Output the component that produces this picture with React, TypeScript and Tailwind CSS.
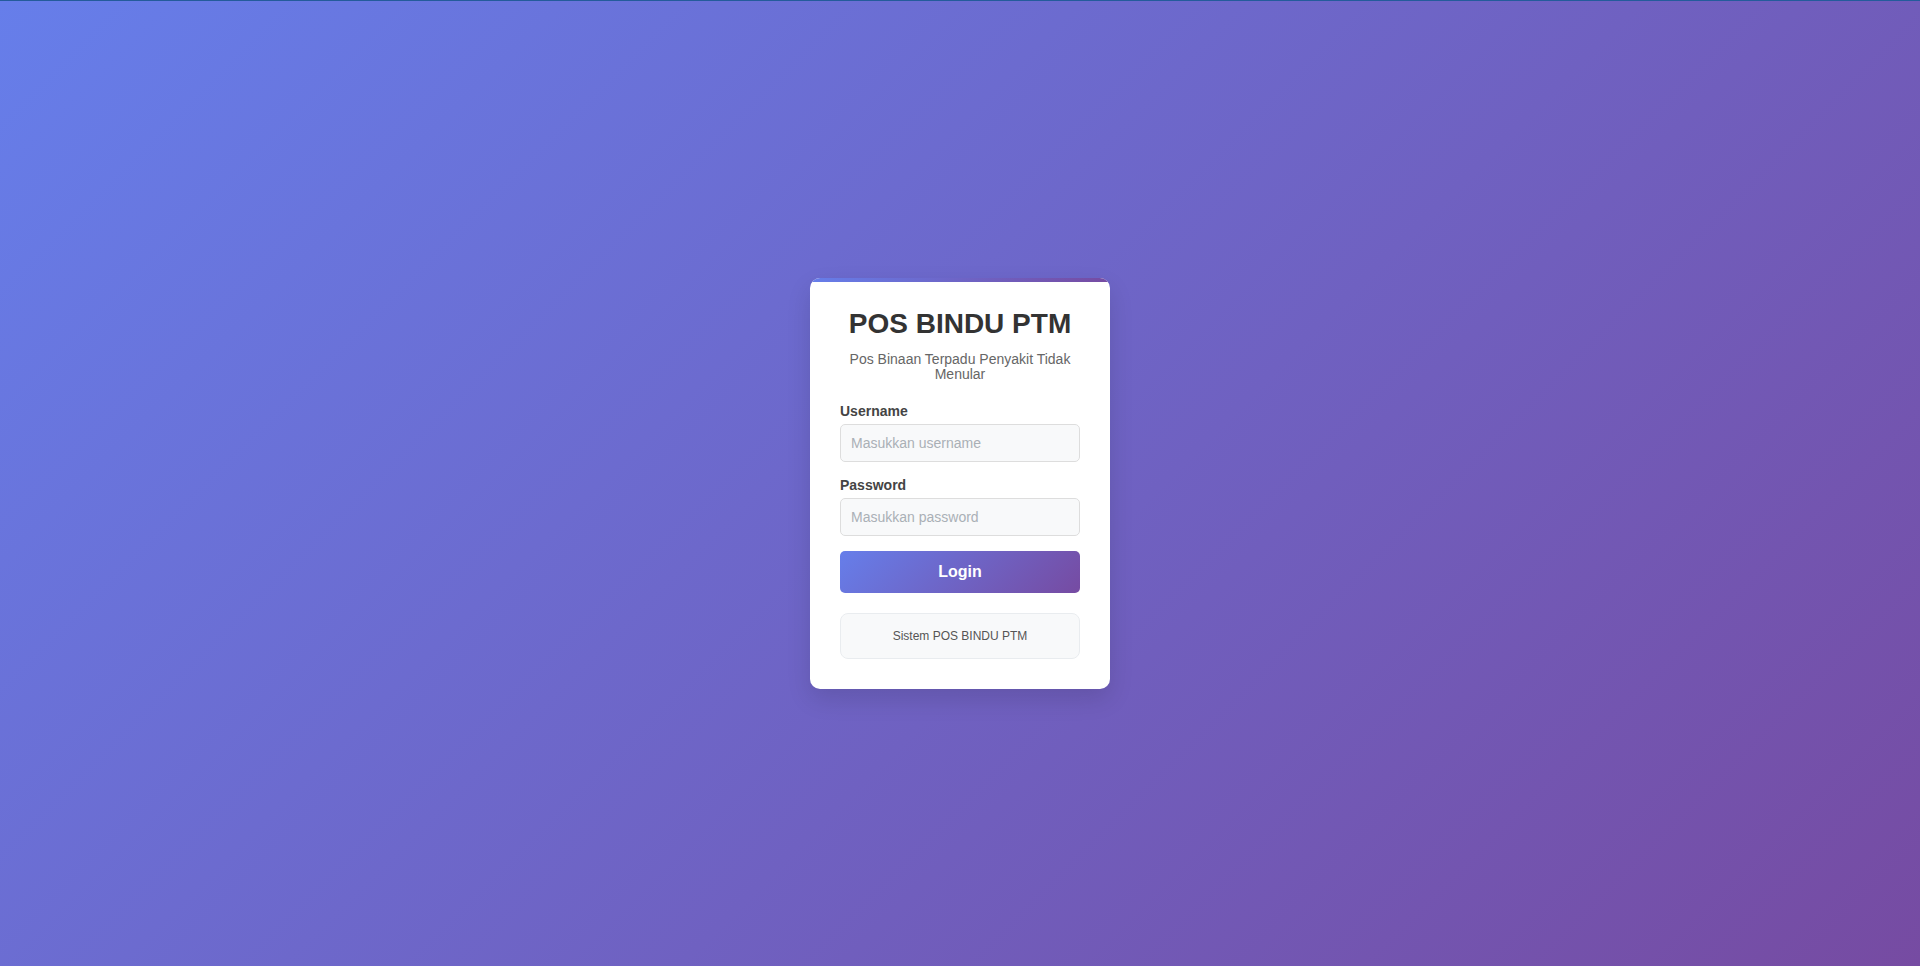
export default function App() {
  return (
    <div className="flex min-h-screen items-center justify-center border-t border-t-[#245b9b] bg-[linear-gradient(135deg,#667eea_0%,#764ba2_100%)] font-['Liberation_Sans',Arial,sans-serif]">
      <div className="relative w-[300px] overflow-hidden rounded-[10px] bg-white px-[30px] pt-[30px] pb-[30px] shadow-[0_10px_25px_rgba(0,0,0,0.12)]">
        <div className="absolute inset-x-0 top-0 h-1 bg-[linear-gradient(90deg,#667eea,#764ba2)]" />

        {/* Header */}
        <div className="text-center">
          <h1 className="text-[28px] font-bold leading-[1.15] text-[#333]">
            POS BINDU PTM
          </h1>
          <p className="mt-[12px] text-sm leading-[15px] text-[#666]">
            Pos Binaan Terpadu Penyakit Tidak Menular
          </p>
        </div>

        {/* Form */}
        <form className="mt-[21px]" onSubmit={(e) => e.preventDefault()}>
          <div className="mb-[15px]">
            <label className="mb-[5px] block text-sm font-bold leading-4 text-[#444]">
              Username
            </label>
            <input
              type="text"
              placeholder="Masukkan username"
              className="block h-[38px] w-full rounded-[5px] border border-[#ddd] bg-[#f8f9fa] px-[10px] text-sm text-[#333] outline-none placeholder:text-[#aab0b6]"
            />
          </div>
          <div className="mb-[15px]">
            <label className="mb-[5px] block text-sm font-bold leading-4 text-[#444]">
              Password
            </label>
            <input
              type="password"
              placeholder="Masukkan password"
              className="block h-[38px] w-full rounded-[5px] border border-[#ddd] bg-[#f8f9fa] px-[10px] text-sm text-[#333] outline-none placeholder:text-[#aab0b6]"
            />
          </div>
          <button
            type="submit"
            className="block h-[42px] w-full rounded-[5px] bg-[linear-gradient(135deg,#667eea_0%,#764ba2_100%)] text-base font-bold text-white"
          >
            Login
          </button>
        </form>

        {/* Info */}
        <div className="mt-[20px] rounded-[8px] border border-[#e9ecef] bg-[#f8f9fa] py-[15px] text-center text-xs leading-[14px] text-[#555]">
          Sistem POS BINDU PTM
        </div>
      </div>
    </div>
  );
}
